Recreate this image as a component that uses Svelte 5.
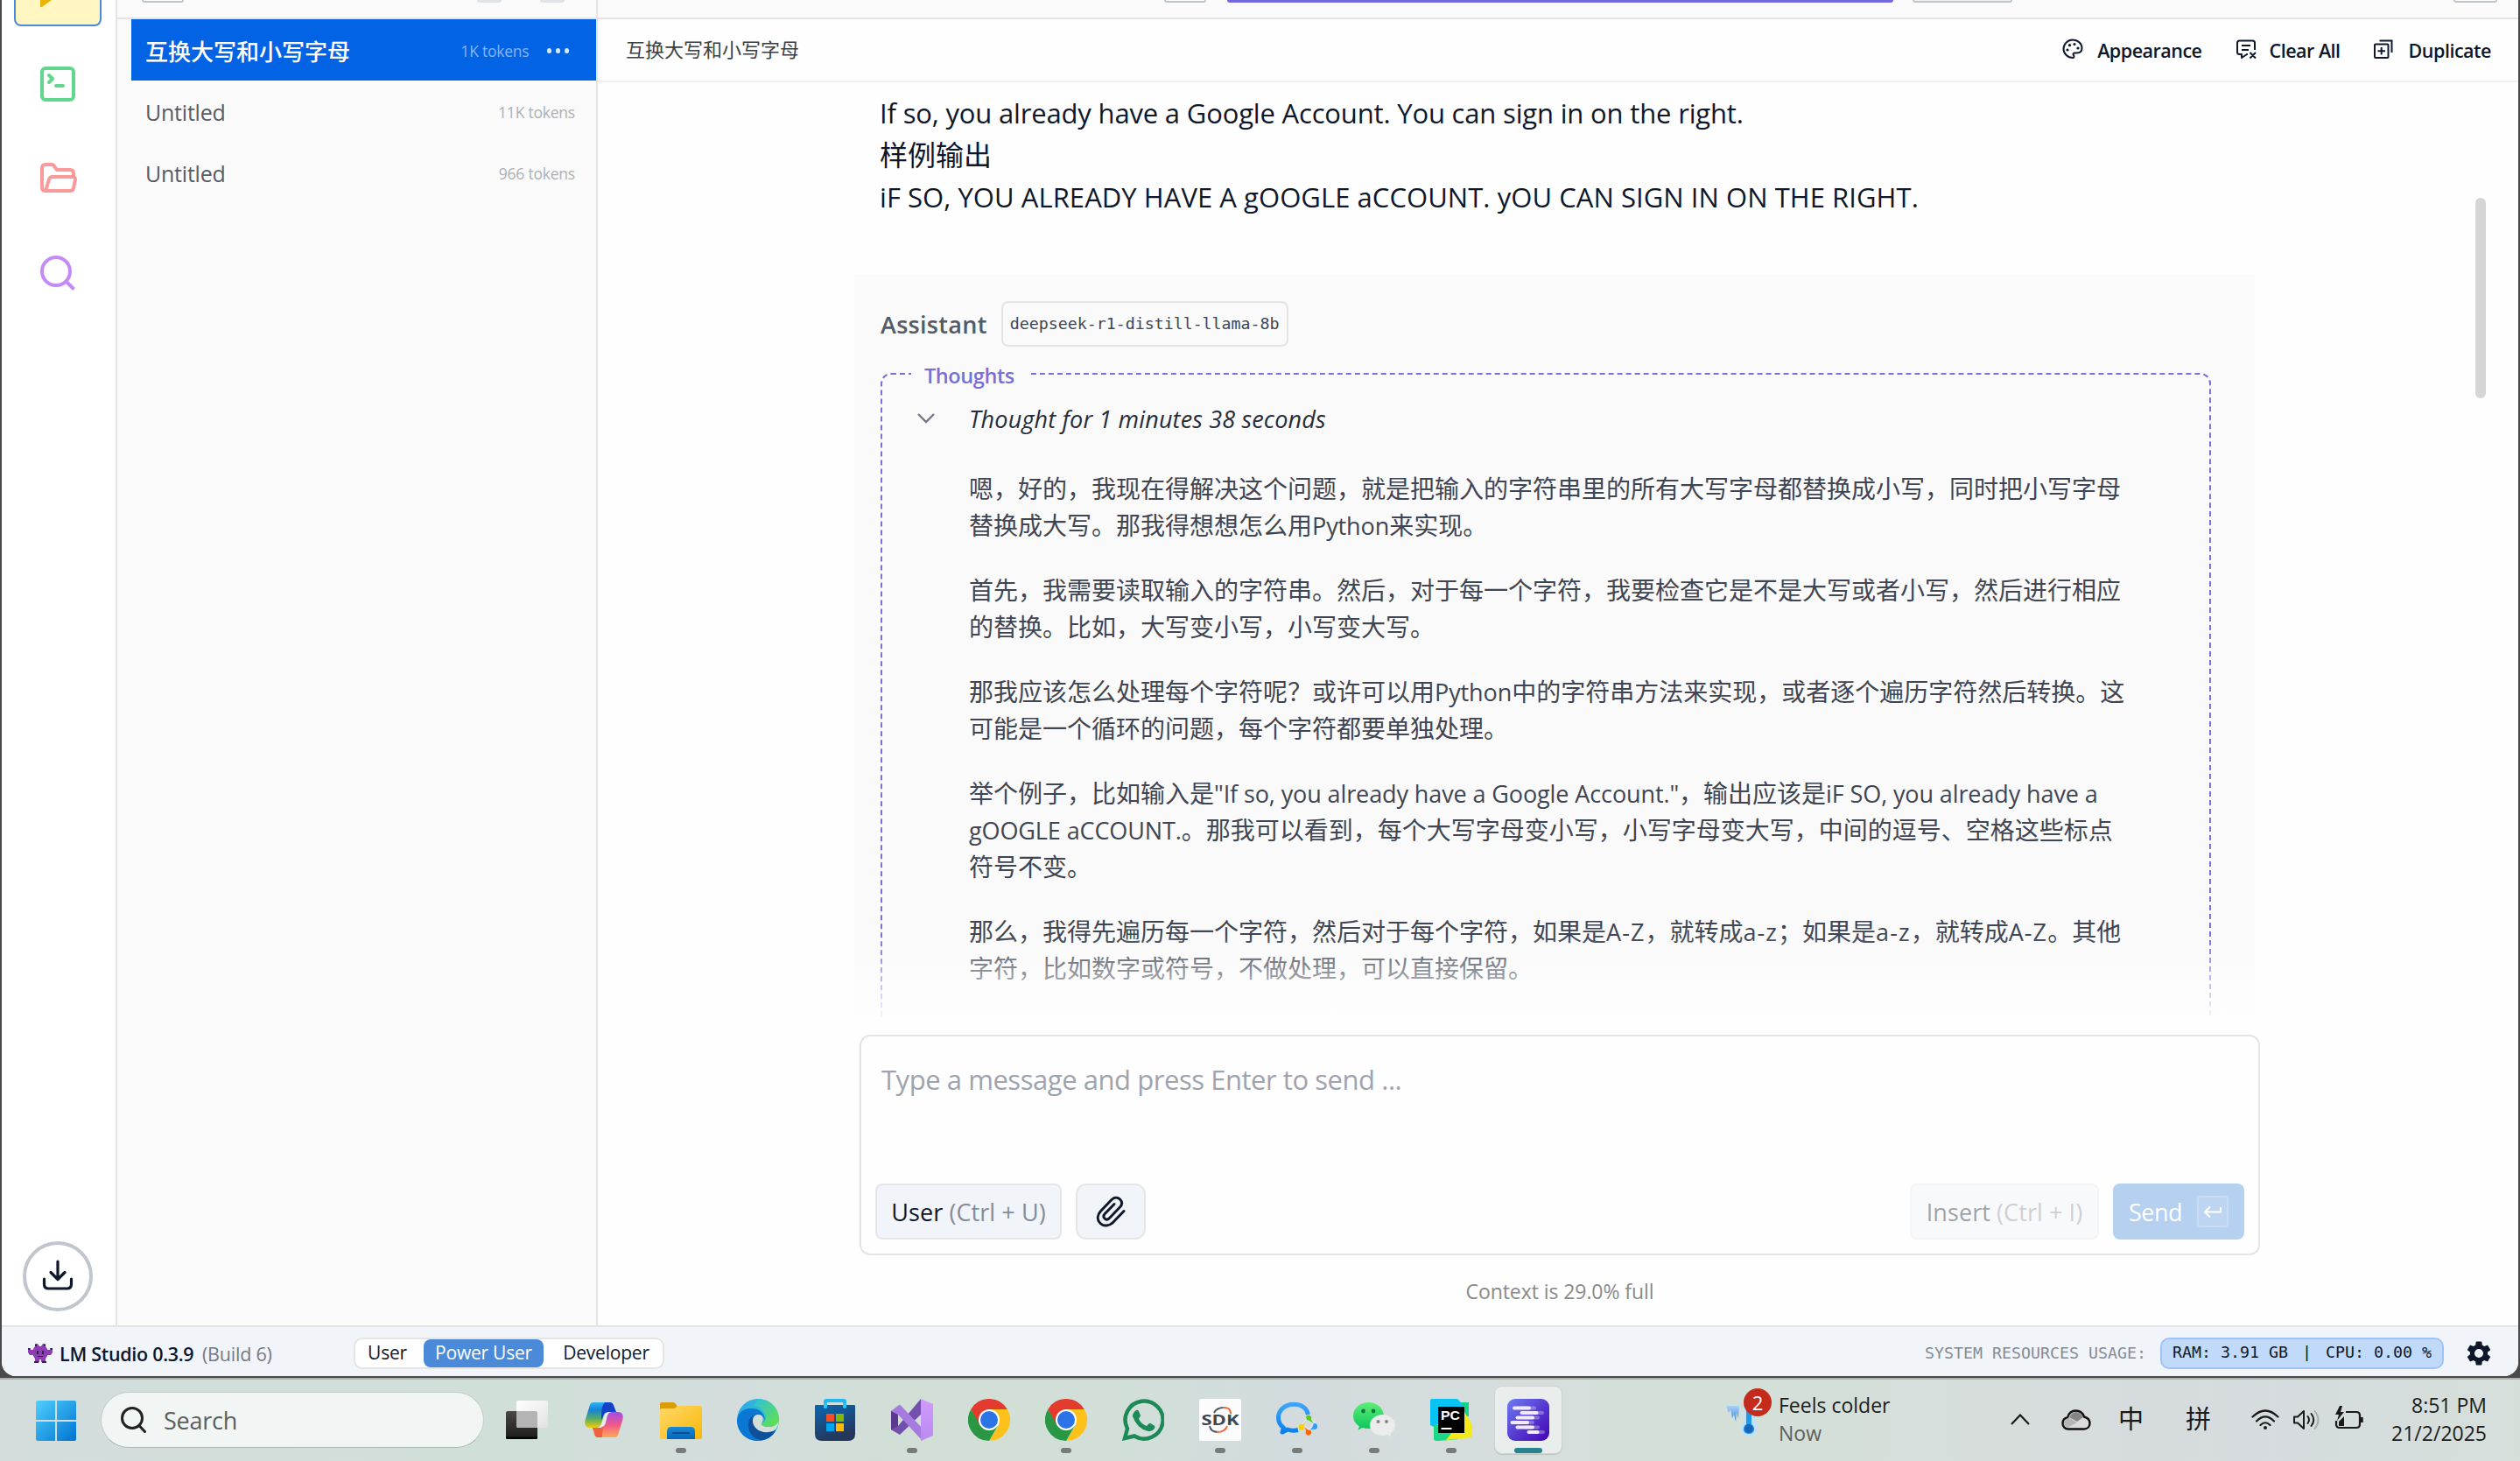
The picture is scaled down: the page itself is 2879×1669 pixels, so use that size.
<script>
  const chats = [
    { title: '互换大写和小写字母', tokens: '1K tokens', active: true },
    { title: 'Untitled', tokens: '11K tokens', active: false },
    { title: 'Untitled', tokens: '966 tokens', active: false },
  ];

  const question = [
    'If so, you already have a Google Account. You can sign in on the right.',
    '样例输出',
    'iF SO, YOU ALREADY HAVE A gOOGLE aCCOUNT. yOU CAN SIGN IN ON THE RIGHT.',
  ];

  const thoughts = [
    ['嗯，好的，我现在得解决这个问题，就是把输入的字符串里的所有大写字母都替换成小写，同时把小写字母', '替换成大写。那我得想想怎么用Python来实现。'],
    ['首先，我需要读取输入的字符串。然后，对于每一个字符，我要检查它是不是大写或者小写，然后进行相应', '的替换。比如，大写变小写，小写变大写。'],
    ['那我应该怎么处理每个字符呢？或许可以用Python中的字符串方法来实现，或者逐个遍历字符然后转换。这', '可能是一个循环的问题，每个字符都要单独处理。'],
    ['举个例子，比如输入是"If so, you already have a Google Account."，输出应该是iF SO, you already have a', 'gOOGLE aCCOUNT.。那我可以看到，每个大写字母变小写，小写字母变大写，中间的逗号、空格这些标点', '符号不变。'],
    ['那么，我得先遍历每一个字符，然后对于每个字符，如果是A-Z，就转成a-z；如果是a-z，就转成A-Z。其他', '字符，比如数字或符号，不做处理，可以直接保留。'],
  ];

  const apps = [
    { id: 'tasks' }, { id: 'copilot' }, { id: 'files', open: true }, { id: 'edge' }, { id: 'store' },
    { id: 'vs', open: true }, { id: 'chrome' }, { id: 'chrome', open: true }, { id: 'whatsapp' },
    { id: 'sdk', open: true }, { id: 'wecom', open: true }, { id: 'wechat', open: true },
    { id: 'pycharm', open: true }, { id: 'lmstudio', active: true },
  ];

  // Splits a line into Latin and CJK runs so each can carry its own metrics.
  const runs = (line) =>
    (line.match(/[\x20-\x7e]+|[^\x20-\x7e]+/g) ?? []).map((text) => ({
      text,
      latin: /^[\x20-\x7e]/.test(text),
      range: /^\w-\w$/.test(text),
    }));
</script>

{#snippet mixed(line)}{#each runs(line) as r}{#if r.latin}<span class="latin" class:range={r.range}>{r.text}</span>{:else}{r.text}{/if}{/each}{/snippet}

{#snippet appIcon(id)}
  <svg class="app-icon" viewBox="0 0 48 48">
    {#if id === 'tasks'}
      <rect x="0" y="14" width="36" height="32" rx="2" fill="url(#gDark)" />
      <path d="M0 43.500h36v1a1.500 1.500 0 0 1-1.500 1.500h-33A1.500 1.500 0 0 1 0 44.500z" fill="#050505" />
      <rect x="12" y="2" width="36" height="31" rx="2" fill="url(#gLight)" />
      <path d="M12 14h22a2 2 0 0 1 2 2v17H14a2 2 0 0 1-2-2z" fill="#b4b4b4" />
    {:else if id === 'copilot'}
      <path d="M12 4h18c4 0 5 3 6 7l1 4h-7c-5 0-6 3-7 7l-2 6c-1 4-3 5-7 5H8c-5 0-7-4-5-10L7 10c1-4 2-6 5-6z" fill="url(#gCopA)" />
      <path d="M25 4h6c3 0 4 3 5 6l2 5h-8c-4 0-6 1-7 5l-2 4c0-8 0-16 4-20z" fill="#1540c8" />
      <path d="M36 44H18c-4 0-5-3-6-7l-1-4h7c4 0 6-2 7-6l2-7c1-3 3-5 7-5h6c5 0 7 4 5 10l-4 13c-1 4-2 6-5 6z" fill="url(#gCopB)" />
      <path d="M22 44h-5c-3 0-4-3-4-6l-2-5h7c3 0 5-1 6-4l-2 11z" fill="#f0603c" />
      <path d="M24 21c1-4 3-6 6-6h3c-5 1-5 4-6 8l-1 4c-1 4-4 6-9 6 4-2 5-6 7-12z" fill="#e9ecec" />
    {:else if id === 'files'}
      <path d="M0 6a2 2 0 0 1 2-2h13q2 0 3 2l3 4-6 4H0z" fill="#dc9c06" />
      <path d="M0 13q0-2 2-2h13q2 0 3-1l2-2h26a2 2 0 0 1 2 2v34a2 2 0 0 1-2 2H2a2 2 0 0 1-2-2z" fill="url(#gFolder)" />
      <path d="M8 46V37q0-5 5-5h22q5 0 5 5v9z" fill="url(#gBlue)" />
      <rect x="14" y="38" width="20" height="2" rx="1" fill="#0b4f93" />
    {:else if id === 'edge'}
      <circle cx="24" cy="24" r="24" fill="url(#gEdgeA)" />
      <path d="M0 24C3 11 12 11 17 11c9 0 15 6 15 14-1-4-4-7-8-7-5 0-7 4-7 8 0 9 8 15 17 15 4 0 8-3 10-5-3 7-11 12-20 12C10 48 0 38 0 24z" fill="#0a78d2" />
      <path d="M24 18c-7-1-12 6-11 14 1 9 8 15 16 15 7-1 13-6 15-11q1-1-1-.5c-13 4-24-1-25-10-.3-4 2-7 6-7.500z" fill="#10509a" />
      <path d="M24 18c6 0 7 5 4 10 2 4 5 4 9 4 5 0 9-3 11-7-1 6-3 10-7 12-13 4-23-3-23-12 0-4 2-7 6-7z" fill="#d3ddda" />
      <path d="M28 28c-1 2 2 4 8 4 8 0 12-5 12-10C47 9 37 0 24 0l-4 8c8 1 13 8 13 14 0 3-2 4-5 6z" fill="url(#gEdgeB)" />
    {:else if id === 'store'}
      <path d="M11 10V3q0-3 3-3h20q3 0 3 3v7h-4V4H15v6z" fill="#22b6f2" />
      <path d="M1 8q0-1 1-1h44q1 0 1 1v32q0 8-8 8H9q-8 0-8-8z" fill="url(#gStore)" />
      <path d="M11 5h4v5q-2 2-4 0zm22 0h4v5q-2 2-4 0z" fill="#28c8f4" />
      <rect x="14" y="17" width="9" height="9" fill="#f25022" /><rect x="25" y="17" width="9" height="9" fill="#7fba00" />
      <rect x="14" y="28" width="9" height="9" fill="#00a4ef" /><rect x="25" y="28" width="9" height="9" fill="#ffb900" />
    {:else if id === 'vs'}
      <path d="M0 14l8-3v28l-8-4z" fill="#5b3a8c" />
      <path d="M0 35l8-4L34 0l2 16L10 41z" fill="#7450ad" />
      <path d="M0 14l9-7q1-.5 2 .5L36 34v14L8 18z" fill="#a57bdf" />
      <path d="M34 0l14 6v36l-14 6z" fill="url(#gVs)" />
    {:else if id === 'chrome'}
      <path d="M3.200 12A24 24 0 0 1 44.800 12H24L13 31z" fill="#e33b2e" />
      <path d="M44.800 12A24 24 0 0 1 24 48L35 30 24 12z" fill="#fdc11c" />
      <path d="M24 48A24 24 0 0 1 3.200 12L13.600 30 24 36l10.400-6z" fill="#2a9745" />
      <circle cx="24" cy="24" r="12" fill="#fff" /><circle cx="24" cy="24" r="10" fill="#2a74e8" />
    {:else if id === 'whatsapp'}
      <path d="M3 45l3-11A21.500 21.500 0 1 1 14 42.500z" fill="none" stroke="#1c8a57" stroke-width="4.500" />
      <path d="M16 13q2-1 3 1l2 5q0 1-1 2l-1 2q3 6 9 8l3-3 1-.3 5 3q1 1 0 3-3 4-8 3Q17 34 12 20q0-4 4-7z" fill="#1c8a57" />
    {:else if id === 'sdk'}
      <rect width="48" height="48" rx="2" fill="#fcfcfc" />
      <path d="M17 16q3-6 11-6" fill="none" stroke="#4a5863" stroke-width="1.800" /><path d="M27 10q9-1 9 7" fill="none" stroke="#ee6a3c" stroke-width="2" />
      <path d="M12 31q1 7 10 7" fill="none" stroke="#4a5863" stroke-width="1.800" /><path d="M20 38q10 0 12-7" fill="none" stroke="#ee6a3c" stroke-width="2" />
      <text class="sdk" x="2.500" y="30" textLength="43" lengthAdjust="spacingAndGlyphs">SDK</text>
    {:else if id === 'wecom'}
      <path d="M36.500 18C35 10 28 6.300 20 6.300 10 6.300 2.500 13 2.500 21.500c0 5 2.500 9 6 11.500l-1.500 5 6-3c4 1.500 8 1.500 12 .5" fill="none" stroke="url(#gWecom)" stroke-width="5" stroke-linejoin="round" />
      <path d="M32 26l5-6 7 7-7 8-7-7z" fill="none" stroke="#e5eeee" stroke-width="1" />
      <path d="M34 21a3 3 0 1 1 6 2q0 2 3 5-6-4-8-4z" fill="#4fd10c" /><path d="M43 28a3 3 0 1 1 1 7q-2-1-5 1 3-4 4-8z" fill="#2f9cf8" />
      <path d="M39 36a3.200 3.200 0 1 1-5 1q0-2-2-5 4 4 7 4z" fill="#ff6600" /><path d="M32 34a3.500 3.500 0 1 1-4-5q2 1 6-3-3 4-2 8z" fill="#fcd100" />
    {:else if id === 'wechat'}
      <path d="M17.500 4C8 4 0 10.500 0 19.500c0 5 2.500 9 7 12l-1.500 4 5-2.500q3.500 1 7 1C27 34 35 28 35 19.500S27 4 17.500 4z" fill="url(#gWechat)" />
      <circle cx="11.500" cy="14" r="2.400" fill="#0c7a3c" /><circle cx="23" cy="14" r="2.400" fill="#0c7a3c" />
      <path d="M33.500 18C26 18 19 23 19 30s6.500 12 14.500 12q3 0 6-1l4 2-1-3.500C46 37 48 34 48 30c0-7-7-12-14.500-12z" fill="#ececec" />
      <circle cx="28.500" cy="26" r="2" fill="#868686" /><circle cx="38" cy="26" r="2" fill="#868686" />
    {:else if id === 'pycharm'}
      <path d="M30 4h14v16H30z" fill="#12d58a" />
      <path d="M2 0h28q2 0 3 2l6 8-35 22-4-2V2q0-2 2-2z" fill="#08c3f6" />
      <path d="M4 30l8 0 20 16-22 2H7q-3 0-3-3z" fill="#1ed786" />
      <path d="M39 15l8 13q1 1 1 3v12q0 1-1 1l-29 3 8-10h13z" fill="#f3ea17" />
      <rect x="9" y="9" width="30" height="30" fill="#000" /><rect x="12.500" y="33" width="12" height="2" fill="#fff" />
      <text class="pc" x="12" y="24" textLength="22" lengthAdjust="spacingAndGlyphs">PC</text>
    {:else}
      <rect width="48" height="48" rx="9" fill="url(#gLm)" />
      <g fill="#fff" fill-opacity=".3"><rect x="14" y="8.500" width="19" height="4" rx="2" /><rect x="22" y="14" width="20" height="4" rx="2" /><rect x="18" y="19.500" width="19" height="4" rx="2" /><rect x="12" y="25" width="19" height="4" rx="2" /><rect x="18" y="30.500" width="19" height="4" rx="2" /><rect x="30" y="36" width="13" height="4" rx="2" /></g>
      <g fill="#f1eafc"><rect x="6" y="8.500" width="21" height="4" rx="2" /><rect x="14.500" y="14" width="21" height="4" rx="2" /><rect x="9.500" y="19.500" width="21.500" height="4" rx="2" /><rect x="3.500" y="25" width="21.500" height="4" rx="2" /><rect x="9.500" y="30.500" width="21.500" height="4" rx="2" /><rect x="22.500" y="36" width="14" height="4" rx="2" /></g>
    {/if}
  </svg>
{/snippet}

<svg class="defs" aria-hidden="true">
  <defs>
    <linearGradient id="gDark" x2="0" y2="1"><stop stop-color="#4a4745" /><stop offset="1" stop-color="#1b1b1b" /></linearGradient>
    <linearGradient id="gLight" x2="1" y2="1"><stop stop-color="#fff" /><stop offset="1" stop-color="#e2e2e2" /></linearGradient>
    <linearGradient id="gCopA" x2="0" y2="1"><stop stop-color="#2cb4f4" /><stop offset=".3" stop-color="#1683d8" /><stop offset=".65" stop-color="#58ad62" /><stop offset="1" stop-color="#f5cc05" /></linearGradient>
    <linearGradient id="gCopB" x2="0" y2="1"><stop stop-color="#a14be8" /><stop offset=".5" stop-color="#f0598c" /><stop offset="1" stop-color="#fcaa52" /></linearGradient>
    <linearGradient id="gFolder" x2="1" y2="1"><stop stop-color="#ffd869" /><stop offset="1" stop-color="#f9b807" /></linearGradient>
    <linearGradient id="gBlue" x2="0" y2="1"><stop stop-color="#1a8ad6" /><stop offset="1" stop-color="#0464b8" /></linearGradient>
    <linearGradient id="gEdgeA" x2="1" y2="0"><stop stop-color="#2fa8ee" /><stop offset="1" stop-color="#2cc8b8" /></linearGradient>
    <linearGradient id="gEdgeB" x2="1" y2="1"><stop stop-color="#2fc0e0" /><stop offset="1" stop-color="#66e33f" /></linearGradient>
    <linearGradient id="gStore" x2=".4" y2="1"><stop stop-color="#0b67b3" /><stop offset="1" stop-color="#243659" /></linearGradient>
    <linearGradient id="gVs" x2="0" y2="1"><stop stop-color="#cf9cfb" /><stop offset="1" stop-color="#b98af0" /></linearGradient>
    <linearGradient id="gWecom" x2="0" y2="1"><stop stop-color="#3fa5fc" /><stop offset="1" stop-color="#0a80ee" /></linearGradient>
    <linearGradient id="gWechat" x2="0" y2="1"><stop stop-color="#5fee76" /><stop offset="1" stop-color="#0bc45c" /></linearGradient>
    <linearGradient id="gLm" x2="1" y2="1"><stop stop-color="#6f7cf2" /><stop offset=".55" stop-color="#5536cf" /><stop offset="1" stop-color="#4505b5" /></linearGradient>
    <linearGradient id="gWin" x2="1" y2="1"><stop stop-color="#4fd0ff" /><stop offset="1" stop-color="#0072d0" /></linearGradient>
    <linearGradient id="gIce" x2="0" y2="1"><stop stop-color="#a9d2f8" /><stop offset="1" stop-color="#3d86d8" /></linearGradient>
  </defs>
</svg>

<div class="screen">
  <div class="window">
    <div class="body">
      <nav class="rail">
        <div class="rail-active"><svg viewBox="0 0 100 28"><path d="M30 0h13L32 8h-2z" fill="#eab308" /></svg></div>
        <svg class="rail-icon terminal" viewBox="0 0 40 40" fill="none" stroke="#63d68e" stroke-width="4" stroke-linecap="round" stroke-linejoin="round"><rect x="2" y="2" width="36" height="36" rx="4" /><path d="M10 10l4 4-4 4M18 22h8" /></svg>
        <svg class="rail-icon folder" viewBox="0 0 42 34" fill="none" stroke="#fa9a9a" stroke-width="4" stroke-linejoin="round" stroke-linecap="round"><path d="M6 32q-4 0-4-4V6q0-4 4-4h7q2 0 3 2l3 4h15q4 0 4 4v4M6 32l4-13q1-3 4-3h23q3 0 3 3l-2 10q-1 3-4 3z" /></svg>
        <svg class="rail-icon lens" viewBox="0 0 40 40" fill="none" stroke="#c48af8" stroke-width="4"><circle cx="18" cy="18" r="16" /><path d="M29.500 29.500L38.500 38.500" /></svg>
        <div class="download"><svg viewBox="0 0 36 36" fill="none" stroke="#0f172a" stroke-width="3.200" stroke-linecap="round" stroke-linejoin="round"><path d="M18 3v20M10 15.500l8 8 8-8M2.500 23v6q0 5 5 5h21q5 0 5-5v-6" /></svg></div>
      </nav>

      <div class="workspace">
        <div class="toolbar">
          <div class="tool-left"><i class="tab"></i><span class="dots-pair"><i class="disc"></i><i class="disc"></i></span></div>
          <div class="tool-main"><i class="tab t1"></i><i class="tab purple"></i><i class="tab t2"></i><i class="tab t3"></i></div>
        </div>
        <div class="panes">
          <aside class="chats">
            {#each chats as c}
              <div class="chat" class:active={c.active}>
                <span class="chat-title">{c.title}</span>
                <span class="tokens">{c.tokens}</span>
                {#if c.active}<span class="more"><i></i><i></i><i></i></span>{/if}
              </div>
            {/each}
          </aside>

          <main>
            <header>
              <span class="crumb">互换大写和小写字母</span>
              <span class="action">
                <svg class="palette" viewBox="0 0 24 24" fill="none" stroke="#0f172a" stroke-width="2"><path d="M12 22C6.500 22 1.500 17.600 1.500 12S6.200 1.500 12 1.500 22.500 5.700 22.500 11c0 3.500-2.500 5.500-6 5.500h-2c-2 0-2.500 1.500-1.500 2.700 1 1.300.5 2.800-1 2.800z" /><g fill="#0f172a" stroke="none"><circle cx="6" cy="13" r="1.600" /><circle cx="8.500" cy="7.700" r="1.600" /><circle cx="14" cy="6.500" r="1.600" /><circle cx="18" cy="11" r="1.600" /></g></svg>
                <span>Appearance</span>
              </span>
              <span class="action">
                <svg class="clear" viewBox="0 0 24 24" fill="none" stroke="#0f172a" stroke-width="2" stroke-linejoin="round"><path d="M22 13V5q0-2.500-2.500-2.500h-15Q2 2.500 2 5v10.500Q2 18 4.500 18H7v4l6-4h1M7 8h10M7 13h8M16.500 16l6.500 6.500M23 16l-6.500 6.500" /></svg>
                <span>Clear All</span>
              </span>
              <span class="action">
                <svg class="dup" viewBox="0 0 22 22" fill="none" stroke="#0f172a" stroke-width="2"><rect x="1" y="5.500" width="15.500" height="15.500" rx="1" /><path d="M6.500 1.500h14v13.500M8.700 9v8.500M4.500 13.200h8.500" /></svg>
                <span>Duplicate</span>
              </span>
            </header>

            <div class="conversation">
              <div class="question">
                {#each question as line}<p>{line}</p>{/each}
              </div>
              <section class="answer">
                <div class="who"><b>Assistant</b><code>deepseek-r1-distill-llama-8b</code></div>
                <fieldset>
                  <legend><span>Thoughts</span></legend>
                  <div class="summary">
                    <svg viewBox="0 0 20 12" fill="none" stroke="#747884" stroke-width="2.400"><path d="M1 1l9 9 9-9" /></svg>
                    <em>Thought for 1 minutes 38 seconds</em>
                  </div>
                  {#each thoughts as para}
                    <div class="para">{#each para as line}<p>{@render mixed(line)}</p>{/each}</div>
                  {/each}
                </fieldset>
              </section>
              <div class="fade"></div>
              <div class="scroll-thumb"></div>
            </div>

            <div class="composer">
              <div class="placeholder">Type a message and press Enter to send ...</div>
              <div class="controls">
                <button class="role">User <span>(Ctrl + U)</span></button>
                <button class="attach"><svg viewBox="0 0 34 36" fill="none" stroke="#0f172a" stroke-width="3" stroke-linecap="round"><path d="M32 17.500L19.500 30.500C15.500 34.700 9 35.500 5 31.500S1.500 22 5.500 17.500L17.500 5C20.500 2 24.500 1 27.500 4s2.500 6.500-.5 9.500L15.500 25.500c-1.800 1.800-4 2-5.500.5s-1.500-3.500.3-5.500L21 9.500" /></svg></button>
                <button class="insert">Insert <span>(Ctrl + I)</span></button>
                <button class="send"><b>Send</b><i><svg viewBox="0 0 20 14" fill="none" stroke="#fff" stroke-width="2"><path d="M19 2v5.500H1.500M7 1.500l-6 6 6 6" /></svg></i></button>
              </div>
            </div>
            <div class="context">Context is 29.0% full</div>
          </main>
        </div>
      </div>
    </div>

    <footer>
      <svg class="alien" viewBox="0 0 28 24"><path d="M8 4V1h3l2 3h2l2-3h3v3l2 3v8l-2 3v4h-5v-3h-2v3H8v-4l-2-3V7zM0 6h3v2h3v6H2L0 11zM28 6h-3v2h-3v6h4l2-3z" fill="#8b3fb0" /><path d="M8 2h2v2H8zM18 2h2v2h-2zM0 6h2v2H0zM26 6h2v2h-2zM7 21h5v2H7zM16 21h5v2h-5zM10 9h2v4h-2zM16 9h2v4h-2zM11 15h6v1h-6z" fill="#33224a" /></svg>
      <b class="product">LM Studio 0.3.9</b><span class="build">(Build 6)</span>
      <div class="modes"><span class="m1">User</span><span class="m2">Power User</span><span class="m3">Developer</span></div>
      <span class="sys">SYSTEM RESOURCES USAGE:</span>
      <span class="usage"><span>RAM: 3.91 GB</span><span>|</span><span>CPU: 0.00 %</span></span>
      <svg class="gear" viewBox="2 2 20 20"><path fill="#0f172a" d="M19.140 12.940c.04-.3.060-.61.060-.94s-.02-.64-.07-.94l2.030-1.580a.49.490 0 0 0 .12-.61l-1.920-3.320a.49.490 0 0 0-.59-.22l-2.390.96c-.5-.38-1.030-.7-1.620-.94l-.36-2.540A.48.480 0 0 0 13.920 2.400h-3.840c-.24 0-.43.170-.47.410l-.36 2.540c-.59.240-1.130.570-1.620.94l-2.390-.96a.48.480 0 0 0-.59.220L2.740 8.870a.47.470 0 0 0 .12.610l2.030 1.580c-.05.3-.09.630-.09.940s.02.640.07.940l-2.030 1.580a.49.490 0 0 0-.12.610l1.920 3.320c.12.220.37.290.59.220l2.390-.96c.5.380 1.030.7 1.620.94l.36 2.540c.05.240.24.410.48.410h3.840c.24 0 .44-.17.470-.41l.36-2.540c.59-.24 1.130-.56 1.620-.94l2.390.96c.22.080.47 0 .59-.22l1.920-3.320a.47.470 0 0 0-.12-.61zM12 15.600A3.600 3.600 0 1 1 12 8.400a3.600 3.600 0 0 1 0 7.200z" /></svg>
    </footer>
  </div>

  <div class="taskbar">
    <svg class="start" viewBox="0 0 46 46"><path fill="url(#gWin)" d="M0 2q0-2 2-2h20v22H0zM24 0h20q2 0 2 2v20H24zM0 24h22v22H2q-2 0-2-2zM24 24h22v20q0 2-2 2H24z" /></svg>
    <div class="search">
      <svg viewBox="0 0 30 30" fill="none" stroke="#222" stroke-width="3" stroke-linecap="round"><circle cx="14" cy="13" r="11.500" /><path d="M22 21.500l6.500 7" /></svg>
      <span>Search</span>
    </div>
    <div class="apps">
      {#each apps as app}
        <div class="app" class:current={app.active}>
          {@render appIcon(app.id)}
          {#if app.open || app.active}<i class="mark"></i>{/if}
        </div>
      {/each}
    </div>
    <div class="weather">
      <div class="weather-icon">
        <svg viewBox="0 0 42 56"><path d="M0 20h15l-1 14-2-6-1 10-2-8-2 4-2-10-2 4z" fill="url(#gIce)" /><path d="M20 22h13v16q4 4 3 9-2 7-10 8-8-1-9-8 0-5 3-9z" fill="#c3e0fa" /><path d="M23 24h6v17q4 3 3 7t-6 4-6-4 3-7z" fill="#1d9be8" /><circle cx="26" cy="46" r="5" fill="#1565b8" /></svg>
        <span class="badge">2</span>
      </div>
      <div class="weather-text"><span>Feels colder</span><small>Now</small></div>
    </div>
    <svg class="up" viewBox="0 0 22 13" fill="none" stroke="#1a1a1a" stroke-width="2.200"><path d="M1 12L11 1.500 21 12" /></svg>
    <svg class="cloud" viewBox="0 0 34 24"><path d="M8 22.500c-4 0-6.500-3-6.500-6.500s2-6 5.500-6.500C8.500 4 12 1.500 16.500 1.500S24.500 4 26 8.500c4 1 6.500 4 6.500 7.500 0 4-3 6.500-6.500 6.500z" fill="#dcdcdc" stroke="#111" stroke-width="2.400" /><path d="M3 14q2-4 6-4l9 5L7 21q-4-1-4-7z" fill="#b5b5b5" /><path d="M9 9q3-6 8-6t8 6l-7 5z" fill="#858585" /></svg>
    <span class="ime zhong">中</span>
    <span class="ime">拼</span>
    <svg class="wifi" viewBox="0 0 32 24" fill="none" stroke="#1a1a1a" stroke-width="2.200" stroke-linecap="round"><path d="M1.500 8.500Q16-5.500 30.500 8.500M6 13.500Q16 3.500 26 13.500M10.500 18Q16 12.500 21.500 18" /><circle cx="16" cy="21" r="2" fill="#1a1a1a" stroke="none" /></svg>
    <svg class="volume" viewBox="0 0 32 24" fill="none" stroke="#1a1a1a" stroke-width="2" stroke-linecap="round" stroke-linejoin="round"><path d="M2 8.500h4l7-6.500v20l-7-6.500H2zM17.500 8q3 4 0 8M21.500 5q5.500 7 0 14" /><path d="M25.500 2q8 10 0 20" stroke="#a9adab" /></svg>
    <svg class="battery" viewBox="0 0 34 28" fill="none" stroke="#1a1a1a" stroke-width="2.200"><path d="M13 7h12q4 0 4 4v10q0 4-4 4H6q-4 0-4-4v-4" /><path d="M31 13v6" stroke-width="3.500" /><path d="M6 0L1 10h4l-2 7 8-10H7l2-7z" fill="#1a1a1a" stroke="none" /><path d="M5 23v-5l6-6v11z" fill="#1a1a1a" stroke="none" /></svg>
    <div class="clock"><span>8:51 PM</span><span>21/2/2025</span></div>
  </div>
</div>

<style>
  :global(body) { margin: 0; background: #4a4a4c; }
  .defs { position: absolute; width: 0; height: 0; }
  .screen { width: 2879px; height: 1669px; overflow: hidden; font-family: 'Open Sans', 'Noto Sans CJK SC', sans-serif; letter-spacing: -.22px; color: #0f172a; white-space: nowrap; display: flex; flex-direction: column; background: #4a4a4c; }
  .screen :global(svg) { display: block; flex: none; }
  p { margin: 0; }
  button { font: inherit; letter-spacing: inherit; color: inherit; padding: 0; margin: 0; box-sizing: border-box; }

  .window { box-sizing: border-box; height: 1572px; margin: 0 2px; display: flex; flex-direction: column; background: #fff; border-radius: 0 0 16px 16px; overflow: hidden; flex: none; }
  .body { display: flex; height: 1514px; flex: none; }
  .rail { box-sizing: border-box; width: 132px; border-right: 2px solid #e4e4e4; background: #fff; display: flex; flex-direction: column; flex: none; }
  .rail-active { box-sizing: border-box; height: 30px; width: 100px; margin-left: 14px; background: #fff6c2; border: 2px solid #4a8ad8; border-top: 0; border-radius: 0 0 8px 8px; overflow: hidden; }
  .rail-active svg { width: 100px; height: 28px; margin-left: -2px; }
  .rail-icon { margin-left: 44px; width: 40px; height: 40px; }
  .terminal { margin-top: 46px; }
  .folder { width: 42px; height: 34px; margin-top: 70px; }
  .lens { margin-top: 72px; }
  .download { box-sizing: border-box; width: 80px; height: 80px; border: 4px solid #c1c5cd; border-radius: 50%; margin: auto 0 16px 24px; display: grid; place-items: center; }
  .download svg { width: 36px; height: 36px; margin-top: -4px; }

  .workspace { flex: 1; display: flex; flex-direction: column; min-width: 0; }
  .toolbar { box-sizing: border-box; height: 22px; border-bottom: 2px solid #e4e4e4; background: #fafafa; display: flex; flex: none; }
  .tool-left { box-sizing: border-box; width: 549px; border-right: 2px solid #e4e4e4; display: flex; justify-content: space-between; padding: 0 36px 0 28px; }
  .tool-main { flex: 1; display: flex; }
  .tab { box-sizing: border-box; width: 48px; height: 3px; border: 2px solid #bfc5cb; border-top: 0; border-radius: 0 0 7px 7px; background: #fff; }
  .dots-pair { display: flex; gap: 44px; }
  .disc { width: 28px; height: 3px; border-radius: 0 0 14px 14px; background: #dfe3e8; }
  .t1 { margin-left: 647px; width: 48px; }
  .purple { margin-left: 24px; width: 761px; background: #7468da; border: 0; }
  .t2 { margin-left: 22px; width: 114px; background: #eef0f2; }
  .t3 { margin-left: 504px; width: 50px; }

  .panes { flex: 1; display: flex; min-height: 0; }
  .chats { box-sizing: border-box; width: 549px; padding-left: 16px; background: #fafafa; border-right: 2px solid #e4e4e4; flex: none; }
  .chat { box-sizing: border-box; height: 70px; padding: 2px 24px 0 16px; display: flex; align-items: center; font-size: 25px; color: #575b63; }
  .chat-title { flex: 1; }
  .tokens { font-size: 17.500px; color: #adb0b5; }
  .active { background: #0264e4; color: #fff; padding-right: 31px; }
  .active .chat-title { font-size: 26px; letter-spacing: 0; font-weight: 500; }
  .active .tokens { color: #86b5f3; }
  .more { display: flex; gap: 4.500px; margin-left: 20px; }
  .more i { width: 5.500px; height: 5.500px; border-radius: 50%; background: #d8e8fd; }

  main { flex: 1; display: flex; flex-direction: column; min-width: 0; background: #fefefe; }
  header { box-sizing: border-box; height: 72px; border-bottom: 2px solid #efefef; padding: 0 31px 0 32px; display: flex; align-items: center; flex: none; }
  .crumb { flex: 1; font-size: 22px; letter-spacing: 0; color: #3b3f46; padding-bottom: 5px; }
  .action { display: flex; align-items: center; font-size: 21.500px; font-weight: 600; letter-spacing: -.023em; margin-left: 38px; }
  .action svg { margin-top: -2px; }
  .palette { width: 24px; height: 24px; margin-right: 16px; }
  .clear { width: 24px; height: 24px; margin-right: 15px; }
  .dup { width: 22px; height: 22px; margin-right: 18px; }

  .conversation { position: relative; height: 1068px; overflow: hidden; padding-left: 293px; flex: none; }
  .question { padding: 11px 0 65px 29px; font-size: 31px; line-height: 48px; letter-spacing: -.0055em; }
  .question p:nth-child(2) { font-size: 32px; letter-spacing: 0; }
  .question p:nth-child(3) { letter-spacing: .0018em; }
  .answer { box-sizing: border-box; width: 1600px; height: 900px; background: #fafafa; padding: 30px 50px 0 30px; }
  .who { display: flex; align-items: center; gap: 16px; height: 52px; }
  .who b { font-size: 27px; font-weight: 600; letter-spacing: .011em; color: #555b66; }
  code { box-sizing: border-box; width: 328px; height: 52px; border: 2px solid #e4e4e4; border-radius: 8px; font: 18.270px/47px 'DejaVu Sans Mono', monospace; letter-spacing: 0; text-align: center; color: #3e4554; }
  fieldset { box-sizing: border-box; width: 1520px; height: 850px; margin: 13px 0 0; border: 2px dashed #7b70d8; border-radius: 12px; padding: 13px 0 0 33px; min-width: 0; }
  legend { padding: 0 18px 0 15px; height: 36px; line-height: 40px; font-size: 23.500px; font-weight: 600; letter-spacing: -.018em; color: #7a6fd6; }
  .summary { display: flex; align-items: center; height: 42px; margin-bottom: 37px; padding-left: 7px; }
  .summary svg { width: 20px; height: 12px; margin-top: -3px; }
  .summary em { margin: -1px 0 0 39px; font-size: 27px; letter-spacing: .0055em; color: #252c3b; }
  .para { margin: 0 0 32px 66px; font-size: 28px; line-height: 42px; letter-spacing: 0; color: #3f4553; }
  .para p { height: 42px; }
  .latin { font-size: 27px; letter-spacing: -.004em; }
  .range { letter-spacing: .04em; }
  .fade { position: absolute; left: 0; right: 80px; bottom: -6px; height: 100px; background: linear-gradient(rgba(254, 254, 254, 0), #fefefe); }
  .scroll-thumb { position: absolute; right: 37px; top: 132px; width: 12px; height: 229px; border-radius: 6px; background: #d5d5d5; }

  .composer { box-sizing: border-box; width: 1600px; height: 252px; margin: 20px 0 0 299px; border: 2px solid #e4e4e4; border-radius: 12px; padding: 27px 16px 16px; display: flex; flex-direction: column; justify-content: space-between; flex: none; }
  .placeholder { font-size: 31px; line-height: 44px; letter-spacing: -.0145em; color: #9ea3ae; padding-left: 7px; }
  .controls { display: flex; font-size: 27px; letter-spacing: .003em; }
  .controls button { height: 64px; border: 2px solid #e4e6ea; border-radius: 8px; background: #f1f4f9; text-align: center; }
  .controls button span { color: #868b96; }
  .controls .role { width: 213px; }
  .controls .attach { width: 80px; margin-left: 16px; border-radius: 12px; display: grid; place-items: center; }
  .attach svg { width: 34px; height: 36px; }
  .controls .insert { width: 216px; margin-left: auto; opacity: .4; }
  .controls .send { width: 150px; margin-left: 16px; border: 0; background: #b6d0f0; color: #fff; display: flex; align-items: center; padding-left: 18px; }
  .send b { font-weight: 500; width: 78px; text-align: left; letter-spacing: -.02em; }
  .send i { box-sizing: border-box; width: 36px; height: 36px; border: 2px solid #c8dcf5; border-radius: 4px; background: #bed5f2; display: grid; place-items: center; }
  .send i svg { width: 20px; height: 14px; }
  .context { margin-left: 299px; width: 1600px; text-align: center; font-size: 23px; line-height: 32px; letter-spacing: -.003em; margin-top: 25px; color: #8a8a8a; }

  footer { box-sizing: border-box; height: 58px; border-top: 2px solid #e4e4e4; background: #f1f4f9; padding: 4px 31px 0 30px; display: flex; align-items: center; flex: none; }
  .alien { width: 28px; height: 24px; }
  .product { margin-left: 8px; width: 163px; font-size: 21.500px; font-weight: 600; letter-spacing: -.014em; }
  .build { width: 80px; font-size: 21.500px; color: #757a85; }
  .modes { box-sizing: border-box; width: 355px; height: 36px; border: 2px solid #e4e4e4; border-radius: 10px; background: #fff; display: flex; margin-left: 93px; font-size: 21px; line-height: 31px; text-align: center; }
  .m1 { width: 78px; text-indent: -5px; }
  .m2 { width: 137px; background: #4a8ad9; color: #fff; border-radius: 8px; }
  .m3 { flex: 1; text-indent: 7px; }
  .sys { margin-left: auto; font: 18.270px/30px 'DejaVu Sans Mono', monospace; letter-spacing: 0; color: #868b95; }
  .usage { box-sizing: border-box; width: 324px; height: 36px; margin-left: 16px; border: 2px solid #9dc5f8; border-radius: 10px; background: #c1daf9; font: 18.270px/30px 'DejaVu Sans Mono', monospace; letter-spacing: 0; display: flex; justify-content: space-between; padding: 0 12px; }
  .gear { width: 28px; height: 28px; margin-left: 26px; }

  .taskbar { height: 93px; margin-top: 2px; border-top: 2px solid #a9b0ae; background: linear-gradient(90deg, #d4dddc, #d0dfd8 21%, #d4dddc 29%, #d1dfd6 36%, #d1dfd9 45%, #d3dbde 52%, #d6dedc 60%, #d3dfd7 68%, #d6dedb 78%, #d6dbdf 89%, #d5dfda); display: flex; align-items: flex-start; flex: none; }
  .start { width: 46px; height: 46px; margin: 24px 0 0 41px; }
  .search { box-sizing: border-box; width: 438px; height: 64px; margin: 14px 0 0 28px; border: 1.500px solid #c3ccca; border-bottom-color: #aeb6b4; border-radius: 32px; background: #f1f5f4; display: flex; align-items: center; padding-left: 21px; font-size: 27px; color: #5b5e5d; }
  .search svg { width: 30px; height: 30px; margin-right: 20px; }
  .apps { display: flex; margin-left: 5px; }
  .app { box-sizing: border-box; width: 76px; height: 76px; margin: 8px 6px 0; display: flex; flex-direction: column; align-items: center; padding-top: 14px; border-radius: 8px; }
  .current { background: #e9edec; box-shadow: 0 0 0 1px #cdd5d3, 0 1px 1px 1px #bcc4c1; }
  .app-icon { width: 48px; height: 48px; }
  .mark { width: 12px; height: 6px; border-radius: 3px; background: #777c7a; margin-top: 8px; }
  .current .mark { width: 32px; background: #26838f; }
  .sdk { font: 700 15.500px 'Open Sans', sans-serif; fill: #3d4852; letter-spacing: 0; }
  .pc { font: 600 15px 'Liberation Sans', sans-serif; fill: #fff; letter-spacing: 0; }
  .weather { display: flex; margin-left: 182px; width: 325px; }
  .weather-icon { position: relative; width: 42px; height: 56px; margin-top: 10px; }
  .weather-icon svg { width: 42px; height: 56px; }
  .badge { position: absolute; left: 20px; top: 0; width: 32px; height: 32px; border-radius: 50%; background: #c42b1c; color: #fff; font-size: 22px; line-height: 32px; text-align: center; }
  .weather-text { display: flex; flex-direction: column; margin: 13px 0 0 18px; font-size: 23px; line-height: 32px; letter-spacing: 0; color: #1c1c1c; }
  .weather-text small { font-size: 23px; color: #5c605e; }
  .up { width: 22px; height: 13px; margin-top: 39px; }
  .cloud { width: 34px; height: 24px; margin: 34px 0 0 36px; }
  .ime { font-size: 29px; line-height: 40px; letter-spacing: 0; color: #1a1a1a; margin: 25px 0 0 48px; }
  .zhong { margin-left: 31px; }
  .wifi { width: 32px; height: 24px; margin: 34px 0 0 46px; }
  .volume { width: 32px; height: 24px; margin: 34px 0 0 15px; }
  .battery { width: 34px; height: 28px; margin: 30px 0 0 16px; }
  .clock { margin: 13px 38px 0 auto; display: flex; flex-direction: column; align-items: flex-end; font-size: 23px; line-height: 32px; letter-spacing: 0; color: #1c1c1c; }
</style>
